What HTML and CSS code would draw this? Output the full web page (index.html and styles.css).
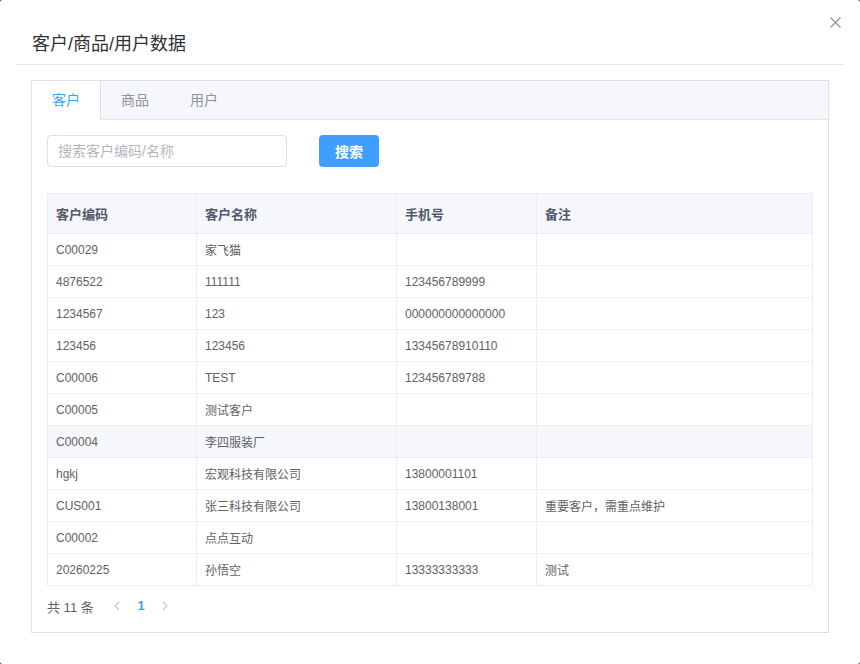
FILE: index.html
```
<!DOCTYPE html>
<html>
<head>
	<meta charset="UTF-8">
	<title>客户/商品/用户数据</title>
	<link rel="stylesheet" href="styles.css">
</head>
<body>

	<div class="dialog">
		<div class="dialog_header">
			<span class="dialog_title">客户/商品/用户数据</span>
			<span class="dialog_close">
				<svg width="11" height="11" viewBox="0 0 11 11"><path d="M0.5 0.5 L10.5 10.5 M10.5 0.5 L0.5 10.5" stroke="#909399" stroke-width="1.2" fill="none"/></svg>
			</span>
		</div>

		<div class="dialog_body">
			<div class="tabs_card">
				<div class="tabs_header">
					<div class="tab_item active">客户</div>
					<div class="tab_item">商品</div>
					<div class="tab_item">用户</div>
				</div>

				<div class="tabs_content">
					<div class="search_bar">
						<input class="search_input" type="text" placeholder="搜索客户编码/名称">
						<button class="search_btn">搜索</button>
					</div>

					<table class="data_table">
						<thead>
							<tr>
								<th class="col_code">客户编码</th>
								<th class="col_name">客户名称</th>
								<th class="col_phone">手机号</th>
								<th>备注</th>
							</tr>
						</thead>
						<tbody>
							<tr><td>C00029</td><td>家飞猫</td><td></td><td></td></tr>
							<tr><td>4876522</td><td>111111</td><td>123456789999</td><td></td></tr>
							<tr><td>1234567</td><td>123</td><td>000000000000000</td><td></td></tr>
							<tr><td>123456</td><td>123456</td><td>13345678910110</td><td></td></tr>
							<tr><td>C00006</td><td>TEST</td><td>123456789788</td><td></td></tr>
							<tr><td>C00005</td><td>测试客户</td><td></td><td></td></tr>
							<tr class="hover"><td>C00004</td><td>李四服装厂</td><td></td><td></td></tr>
							<tr><td>hgkj</td><td>宏观科技有限公司</td><td>13800001101</td><td></td></tr>
							<tr><td>CUS001</td><td>张三科技有限公司</td><td>13800138001</td><td>重要客户，需重点维护</td></tr>
							<tr><td>C00002</td><td>点点互动</td><td></td><td></td></tr>
							<tr><td>20260225</td><td>孙悟空</td><td>13333333333</td><td>测试</td></tr>
						</tbody>
					</table>

					<div class="pagination">
						<span class="page_total">共 11 条</span>
						<span class="page_btn">
							<svg width="8" height="10" viewBox="0 0 8 10"><path d="M6 1 L2 5 L6 9" stroke="#c0c4cc" stroke-width="1.1" fill="none"/></svg>
						</span>
						<span class="page_num">1</span>
						<span class="page_btn">
							<svg width="8" height="10" viewBox="0 0 8 10"><path d="M2 1 L6 5 L2 9" stroke="#c0c4cc" stroke-width="1.1" fill="none"/></svg>
						</span>
					</div>
				</div>
			</div>
		</div>
	</div>

</body>
</html>
```

FILE: styles.css
```
html, body{
	margin:0;
	padding:0;
	background:#5f5f5f;
	font-family:"Liberation Sans", "Noto Sans CJK SC", sans-serif;
}

.dialog{
	position:relative;
	box-sizing:border-box;
	width:860px;
	height:664px;
	background:#fff;
	border-radius:3px;
	padding:0 16px;
}

.dialog_header{
	padding:32px 16px 8px;
	border-bottom:1px solid #e4e7ed;
	line-height:24px;
	height:24px;
}
.dialog_title{
	font-size:18px;
	color:#303133;
}
.dialog_close{
	position:absolute;
	top:17px;
	right:19px;
	width:11px;
	height:11px;
	line-height:0;
}

.dialog_body{
	padding:15px 15px 0;
}

/* tabs */
.tabs_card{
	border:1px solid #dcdfe6;
	background:#fff;
	height:553px;
	box-sizing:border-box;
}
.tabs_header{
	display:flex;
	align-items:flex-start;
	height:38px;
	background:#f5f7fa;
	border-bottom:1px solid #e4e7ed;
}
.tab_item{
	box-sizing:border-box;
	height:39px;
	line-height:38px;
	padding:0 20px;
	font-size:14px;
	color:#909399;
	border-right:1px solid transparent;
}
.tab_item.active{
	background:#fff;
	color:#409eff;
	border-right-color:#dcdfe6;
}

.tabs_content{
	padding:15px;
}

/* search */
.search_bar{
	display:flex;
	gap:32px;
	height:32px;
}
.search_input{
	box-sizing:border-box;
	width:240px;
	height:32px;
	border:1px solid #dcdfe6;
	border-radius:4px;
	padding:0 10px;
	font-size:14px;
	font-family:inherit;
	color:#606266;
	outline:none;
}
.search_input::placeholder{
	color:#b4b7be;
}
.search_btn{
	width:60px;
	height:32px;
	border:none;
	border-radius:4px;
	background:#409eff;
	color:#fff;
	font-size:14px;
	font-weight:bold;
	font-family:inherit;
	padding:0;
}

/* table */
.data_table{
	margin-top:26px;
	width:766px;
	border-collapse:collapse;
	table-layout:fixed;
	font-size:12px;
	color:#606266;
}
.data_table th, .data_table td{
	border:1px solid #ebeef5;
	padding:0 8px;
	text-align:left;
	white-space:nowrap;
}
.data_table th{
	height:39px;
	background:#f5f7fa;
	font-size:13px;
	font-weight:bold;
	color:#515a6e;
}
.data_table td{
	height:31px;
}
.data_table tr.hover td{
	background:#f5f7fa;
}
.col_code{ width:132px; }
.col_name{ width:183px; }
.col_phone{ width:123px; }

/* pagination */
.pagination{
	display:flex;
	align-items:center;
	margin-top:6px;
	height:28px;
	font-size:13px;
	color:#606266;
}
.page_total{
	width:58px;
}
.page_btn, .page_num{
	width:24px;
	text-align:center;
	line-height:0;
}
.page_num{
	line-height:28px;
	color:#409eff;
	font-weight:bold;
}
```
